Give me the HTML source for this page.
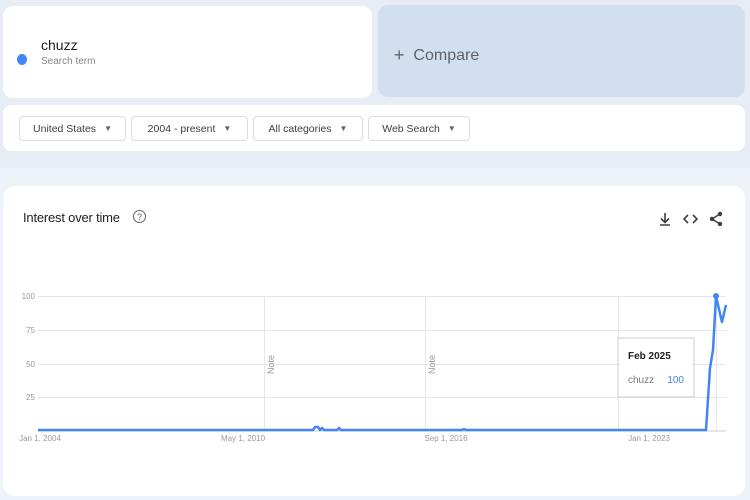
<!DOCTYPE html>
<html><head><meta charset="utf-8"><style>
*{margin:0;padding:0;box-sizing:border-box}
body{width:750px;height:500px;overflow:hidden;background:#eef2f9;font-family:"Liberation Sans",sans-serif;position:relative}
.top{position:absolute;left:0;top:0;width:750px;height:168px;background:#e8ecf5}
.card{position:absolute;background:#fff;border-radius:10px}
.btn{position:absolute;top:116px;height:25px;border:1px solid #dadce0;border-radius:4px;background:#fff;font-size:10.5px;color:#3c4043;display:flex;align-items:center;justify-content:center;gap:8px}
.btn span.a{font-size:8px;color:#5f6368}
</style></head><body>
<div class="top"></div>
<div class="card" style="left:3px;top:6px;width:369px;height:92px"></div>
<div style="position:absolute;left:17px;top:54px;width:10px;height:11px;border-radius:50%;background:#4285f4"></div>
<div style="position:absolute;left:41px;top:37px;font-size:14px;color:#202124">chuzz</div>
<div style="position:absolute;left:41px;top:56px;font-size:10px;color:#80868b">Search term</div>
<div style="position:absolute;left:378px;top:5px;width:367px;height:92px;background:#d2dff1;border-radius:10px"></div>
<div style="position:absolute;left:394px;top:44px;font-size:16px;color:#5f6368"><span style="font-size:18px;position:relative;top:1px">+</span>&nbsp;&nbsp;Compare</div>
<div class="card" style="left:3px;top:105px;width:742px;height:46px;border-radius:8px"></div>
<div class="btn" style="left:19px;width:107px">United States <span class="a">▼</span></div>
<div class="btn" style="left:131px;width:117px">2004 - present <span class="a">▼</span></div>
<div class="btn" style="left:253px;width:110px">All categories <span class="a">▼</span></div>
<div class="btn" style="left:368px;width:102px">Web Search <span class="a">▼</span></div>
<div class="card" style="left:3px;top:186px;width:742px;height:310px;border-radius:12px"></div>
<div style="position:absolute;left:23px;top:210px;font-size:13px;letter-spacing:-0.2px;color:#202124">Interest over time</div>
<div style="position:absolute;left:133px;top:210px;width:13px;height:13px;border:1.2px solid #5f6368;border-radius:50%;font-size:9px;color:#5f6368;display:flex;align-items:center;justify-content:center">?</div>
<svg style="position:absolute;left:655px;top:209px" width="72" height="20" viewBox="0 0 72 20">
<g fill="none" stroke="#3c4043" stroke-width="1.6">
<path d="M10 4v9M6 9.5l4 4 4-4M5 16h10"/>
<path d="M33 6l-4 4 4 4M38 6l4 4-4 4"/>
<path d="M65 5l-8 5 8 5"/>
</g>
<g fill="#3c4043"><circle cx="65" cy="5" r="2.2"/><circle cx="57" cy="10" r="2.2"/><circle cx="65" cy="15" r="2.2"/></g>
</svg>
<svg style="position:absolute;left:0;top:280px" width="750" height="170" viewBox="0 280 750 170" font-family="Liberation Sans, sans-serif">
<g stroke="#e6e6e6" stroke-width="1">
<line x1="38" y1="296.5" x2="726" y2="296.5"/><line x1="38" y1="330.5" x2="726" y2="330.5"/>
<line x1="38" y1="364.5" x2="726" y2="364.5"/><line x1="38" y1="397.5" x2="726" y2="397.5"/>
<line x1="264.5" y1="296" x2="264.5" y2="431"/><line x1="425.5" y1="296" x2="425.5" y2="431"/>
<line x1="618.5" y1="296" x2="618.5" y2="431"/><line x1="716.5" y1="296" x2="716.5" y2="431"/>
</g>
<g font-size="8" fill="#999" text-anchor="end">
<text x="35" y="299">100</text><text x="35" y="333">75</text><text x="35" y="367">50</text><text x="35" y="400">25</text>
</g>
<g font-size="8" fill="#999" text-anchor="middle">
<text x="40" y="441">Jan 1, 2004</text><text x="243" y="441">May 1, 2010</text><text x="446" y="441">Sep 1, 2016</text><text x="649" y="441">Jan 1, 2023</text>
</g>
<g font-size="9" fill="#999">
<text transform="translate(274,374) rotate(-90)">Note</text>
<text transform="translate(435,374) rotate(-90)">Note</text>
<text transform="translate(628,374) rotate(-90)">Note</text>
</g>
<line x1="38" y1="431" x2="726" y2="431" stroke="#ccc"/>
<rect x="618" y="338" width="76" height="59" fill="#fff" stroke="#ccc"/>
<text x="628" y="359" font-size="10" font-weight="bold" fill="#222">Feb 2025</text>
<text x="628" y="383" font-size="10" fill="#777">chuzz</text>
<text x="684" y="383" font-size="10" fill="#4285f4" text-anchor="end">100</text>
<polyline fill="none" stroke="#4285f4" stroke-width="2.5" stroke-linejoin="round" points="38,430 313,430 315,427 318,427 320,430 322,428 324,430 337,430 339,428 341,430 462,430 464,429 466,430 706,430 710,368 713,350 716,296 718,305 722,322 726,305"/>
<circle cx="716" cy="296" r="3" fill="#4285f4"/>
</svg>
</body></html>
